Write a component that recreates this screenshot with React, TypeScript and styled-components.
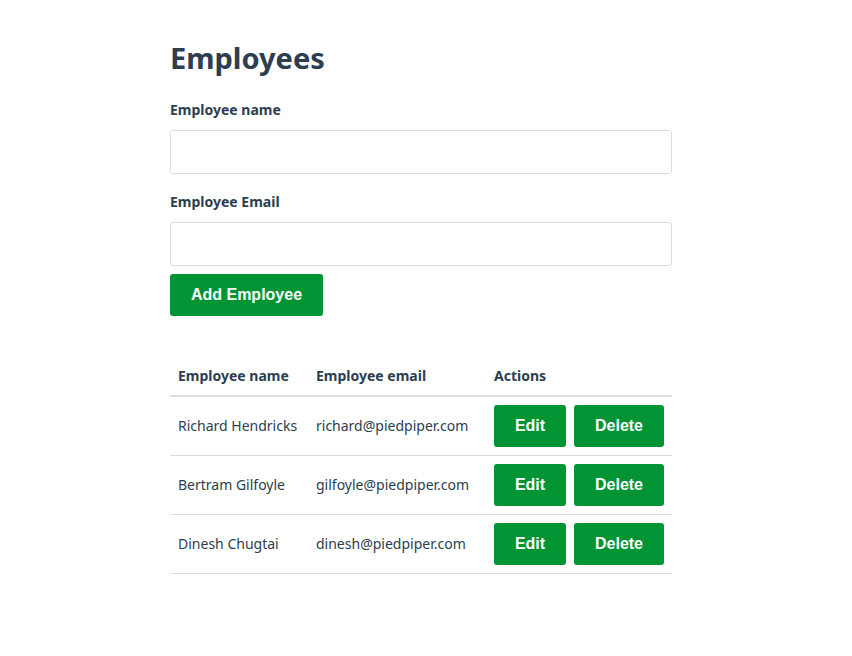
import React from "react";
import styled, { createGlobalStyle } from "styled-components";

const Global = createGlobalStyle`
  html, body { margin: 0; padding: 0; background: #fff; }
  body { font-family: "Noto Sans", "Open Sans", sans-serif; color: #2c3e50; }
  * { box-sizing: border-box; }
`;

const Page = styled.div`
  width: 512px;
  padding-right: 10px;
  margin: 0 auto;
  padding-top: 38px;
`;

const Title = styled.h1`
  margin: 0 0 22px;
  font-size: 29px;
  font-weight: 700;
  line-height: 40px;
  color: #2c3e50;
`;

const Form = styled.form`
  display: flex;
  flex-direction: column;
`;

const Label = styled.label`
  font-size: 14px;
  font-weight: 700;
  line-height: 20px;
  margin-bottom: 10px;
`;

const Input = styled.input<{ $mb: number }>`
  height: 44px;
  border: 1px solid #ddd;
  border-radius: 3px;
  margin-bottom: ${(p) => p.$mb}px;
  font: inherit;
  padding: 0 10px;
`;

const Button = styled.button<{ $w?: number }>`
  height: 42px;
  width: ${(p) => (p.$w ? `${p.$w}px` : "auto")};
  background: #009435;
  color: #fff;
  border: none;
  border-radius: 3px;
  font-family: "Liberation Sans", Arial, sans-serif;
  font-weight: 700;
  font-size: 16px;
  cursor: pointer;
  padding: 0;
`;

const Table = styled.table`
  width: 502px;
  margin-top: 40px;
  border-collapse: collapse;
  table-layout: fixed;
`;

const Th = styled.th<{ $w: number }>`
  width: ${(p) => p.$w}px;
  text-align: left;
  font-size: 14px;
  font-weight: 700;
  height: 40px;
  padding: 0 8px;
  border-bottom: 2px solid #ddd;
  vertical-align: middle;
`;

const Td = styled.td`
  font-size: 14px;
  height: 59px;
  padding: 0 8px;
  border-bottom: 1px solid #ddd;
  vertical-align: middle;
  white-space: nowrap;
`;

const Actions = styled.div`
  display: flex;
  gap: 8px;
`;

const rows = [
  ["Richard Hendricks", "richard@piedpiper.com"],
  ["Bertram Gilfoyle", "gilfoyle@piedpiper.com"],
  ["Dinesh Chugtai", "dinesh@piedpiper.com"],
];

export default function App() {
  return (
    <>
      <Global />
      <Page>
        <Title>Employees</Title>
        <Form onSubmit={(e) => e.preventDefault()}>
          <Label>Employee name</Label>
          <Input $mb={18} />
          <Label>Employee Email</Label>
          <Input $mb={8} />
          <div>
            <Button $w={153}>Add Employee</Button>
          </div>
        </Form>
        <Table>
          <thead>
            <tr>
              <Th $w={138}>Employee name</Th>
              <Th $w={178}>Employee email</Th>
              <Th $w={186}>Actions</Th>
            </tr>
          </thead>
          <tbody>
            {rows.map(([n, e]) => (
              <tr key={n}>
                <Td>{n}</Td>
                <Td>{e}</Td>
                <Td>
                  <Actions>
                    <Button $w={72}>Edit</Button>
                    <Button $w={90}>Delete</Button>
                  </Actions>
                </Td>
              </tr>
            ))}
          </tbody>
        </Table>
      </Page>
    </>
  );
}
